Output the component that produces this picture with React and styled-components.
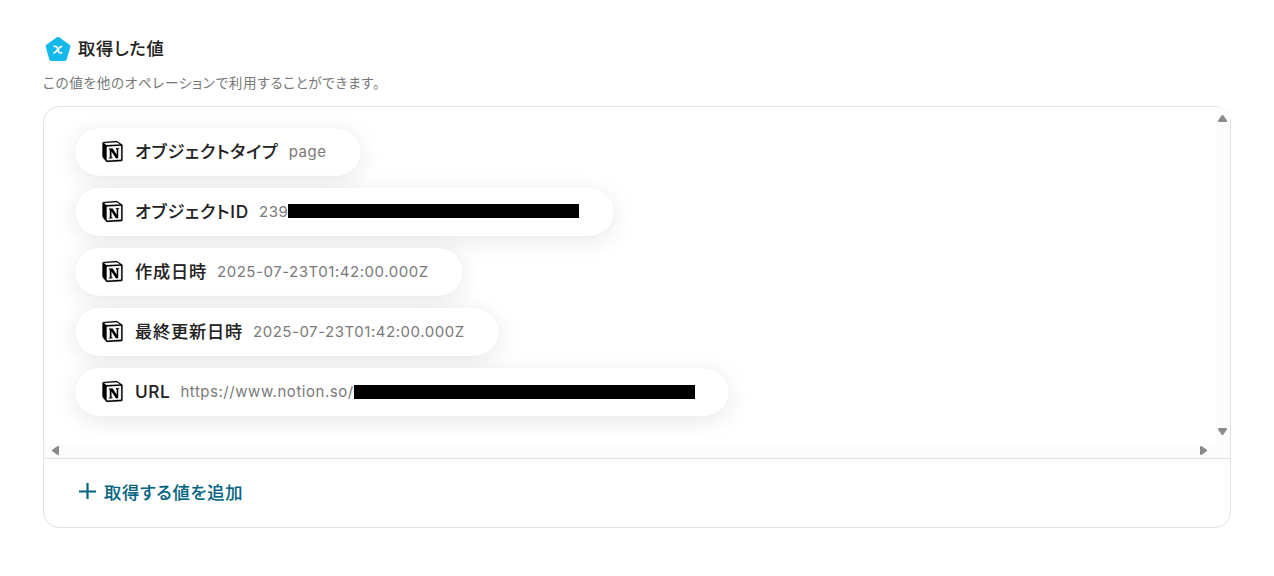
import styled, { createGlobalStyle } from 'styled-components';
import { SiNotion } from 'react-icons/si';

const GlobalStyle = createGlobalStyle`
    * {
        box-sizing: border-box;
    }
    body {
        margin: 0;
        background: #fff;
        font-family: Inter, 'Noto Sans CJK JP', sans-serif;
        font-feature-settings: 'palt';
        color: #222;
    }
`;

const Page = styled.main`
    padding: 36px 43px 0;
`;

const Heading = styled.header`
    display: flex;
    align-items: center;
    gap: 7px;
    height: 26px;
    padding-left: 2px;
`;

const Title = styled.h2`
    margin: 0;
    font-size: 17.25px;
    font-weight: 500;
    line-height: 26px;
    letter-spacing: 0.75px;
    -webkit-text-stroke: 0.1px currentColor;
`;

const Description = styled.p`
    margin: 11px 0 12px;
    font-size: 13.6px;
    line-height: 21px;
    letter-spacing: 0.67px;
    color: #777;
`;

const Panel = styled.section`
    height: 422px;
    border: 1px solid #e2e2e2;
    border-radius: 16px;
`;

const ScrollArea = styled.div`
    display: grid;
    grid-template-columns: 1fr 15px;
    grid-template-rows: 336px 15px;
`;

const Values = styled.div`
    display: flex;
    flex-direction: column;
    align-items: flex-start;
    gap: 12px;
    padding: 21px 31px;
    overflow: hidden;
`;

const Pill = styled.div`
    display: flex;
    align-items: center;
    height: 48px;
    padding: 0 34.5px 2px 27px;
    border-radius: 24px;
    background: #fff;
    box-shadow: 0 0 1px rgba(0, 0, 0, 0.11), 0 5px 26px rgba(0, 0, 0, 0.09);
    white-space: nowrap;
`;

const NotionIcon = styled(SiNotion)`
    width: 21px;
    height: 21px;
    color: #000;
    stroke: #000;
    stroke-width: 0.2px;
    overflow: visible;
`;

const Label = styled.span`
    margin: 0 10px 0 12px;
    padding-bottom: ${({ $flush }) => ($flush ? 0 : 1)}px;
    font-size: 17.2px;
    font-weight: 500;
    letter-spacing: ${({ $flush }) => ($flush ? 0.6 : 0.8)}px;
    -webkit-text-stroke: 0.1px currentColor;
`;

const Value = styled.span`
    font-size: 15px;
    letter-spacing: 0.54px;
    color: #7a7a7a;
`;

const Redacted = styled.span`
    width: ${({ $width }) => $width}px;
    height: 14px;
    margin-top: ${({ $drop }) => $drop || 0}px;
    background: #000;
`;

const Track = styled.div`
    display: flex;
    flex-direction: ${({ $vertical }) => ($vertical ? 'column' : 'row')};
    align-items: center;
    justify-content: space-between;
    padding: ${({ $vertical }) => ($vertical ? '7px 0' : '0 7px')};
    background: #fcfcfc;
`;

const Corner = styled.div`
    background: #fcfcfc;
`;

const Arrow = styled.svg`
    display: block;
    transform: rotate(${({ $turn }) => $turn}deg);
`;

const AddButton = styled.button`
    display: flex;
    align-items: center;
    gap: 8px;
    width: 100%;
    height: 69px;
    padding: 0 35px 3px;
    border: 0;
    border-top: 1px solid #e2e2e2;
    background: none;
    color: #046582;
    font: inherit;
    font-size: 17.25px;
    font-weight: 500;
    letter-spacing: 0.75px;
    -webkit-text-stroke: 0.1px currentColor;
`;

const items = [
    { label: 'オブジェクトタイプ', value: 'page' },
    { label: 'オブジェクトID', value: '239', redacted: 291 },
    { label: '作成日時', value: '2025-07-23T01:42:00.000Z' },
    { label: '最終更新日時', value: '2025-07-23T01:42:00.000Z' },
    { label: 'URL', value: 'https://www.notion.so/', redacted: 341, drop: 2, flush: true },
];

const ScrollArrow = ({ turn }) => (
    <Arrow $turn={turn} width="9" height="9" viewBox="0 0 9 9">
        <path d="M4.5 1 8.5 6.5V7.5H.5V6.5Z" fill="#8a8a8a" stroke="#8a8a8a" strokeLinejoin="round" />
    </Arrow>
);

const Badge = () => (
    <svg width="26" height="26" viewBox="0 0 26 26">
        <path
            d="M13 2.8 23.4 10.3 19.8 23H6.2L2.6 10.3Z"
            fill="#12b9ea"
            stroke="#12b9ea"
            strokeWidth="4"
            strokeLinejoin="round"
        />
        <path
            d="M9.2 10.4c2.6-.5 3 .9 3.7 3.3.6 2.3 1.3 3.7 3.8 3M16.6 10.4c-3 .2-4.6 6.4-7.6 6.4"
            fill="none"
            stroke="#fff"
            strokeWidth="1.7"
            strokeLinecap="round"
        />
    </svg>
);

const App = () => {
    return (
        <Page>
            <GlobalStyle />
            <Heading>
                <Badge />
                <Title>取得した値</Title>
            </Heading>
            <Description>この値を他のオペレーションで利用することができます。</Description>
            <Panel>
                <ScrollArea>
                    <Values>
                        {items.map(({ label, value, redacted, drop, flush }) => (
                            <Pill key={label}>
                                <NotionIcon />
                                <Label $flush={flush}>{label}</Label>
                                <Value>{value}</Value>
                                {redacted && <Redacted $width={redacted} $drop={drop} />}
                            </Pill>
                        ))}
                    </Values>
                    <Track $vertical>
                        <ScrollArrow turn={0} />
                        <ScrollArrow turn={180} />
                    </Track>
                    <Track>
                        <ScrollArrow turn={-90} />
                        <ScrollArrow turn={90} />
                    </Track>
                    <Corner />
                </ScrollArea>
                <AddButton>
                    <svg width="17" height="17" viewBox="0 0 17 17">
                        <path d="M8.5 0v16M0 8.5h17" stroke="currentColor" strokeWidth="2.2" />
                    </svg>
                    取得する値を追加
                </AddButton>
            </Panel>
        </Page>
    );
};

export default App;
